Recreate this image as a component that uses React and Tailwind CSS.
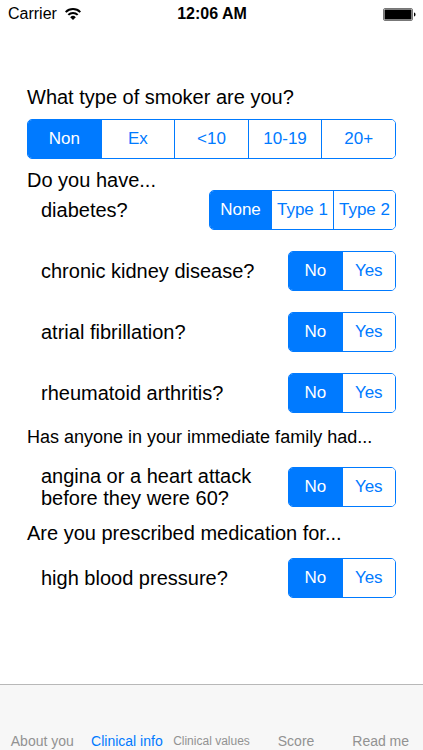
// src/App.jsx

import React, { useState } from 'react';
import clsx from 'clsx';

const yesNo = ['No', 'Yes'];

const conditions = [
    { id: 'diabetes', label: 'diabetes?', options: ['None', 'Type 1', 'Type 2'] },
    { id: 'kidney', label: 'chronic kidney disease?', options: yesNo },
    { id: 'fibrillation', label: 'atrial fibrillation?', options: yesNo },
    { id: 'arthritis', label: 'rheumatoid arthritis?', options: yesNo },
];

const tabs = ['About you', 'Clinical info', 'Clinical values', 'Score', 'Read me'];

function StatusBar() {
    return (
        <header className="grid h-7 grid-cols-3 items-center pl-2 pr-[7px] text-[16px]">
            <div className="flex items-center gap-2">
                <span>Carrier</span>
                <svg width="16" height="12" viewBox="0 0 16 12" fill="none" aria-hidden="true">
                    <path d="M0.7 4.1a10.3 10.3 0 0 1 14.6 0" stroke="black" strokeWidth="2" />
                    <path d="M3.3 6.9a6.6 6.6 0 0 1 9.4 0" stroke="black" strokeWidth="2" />
                    <path d="M8 12 5.2 9.2a4 4 0 0 1 5.6 0z" fill="black" />
                </svg>
            </div>
            <span className="text-center font-bold">12:06 AM</span>
            <svg className="justify-self-end" width="33" height="13" viewBox="0 0 33 13" aria-hidden="true">
                <rect x="0.5" y="0.5" width="29" height="12" rx="1.5" fill="white" stroke="#777" />
                <rect x="1.5" y="1.5" width="27" height="10" rx="0.5" fill="black" />
                <path d="M31 4.5c2 .5 2 3.5 0 4z" fill="black" />
            </svg>
        </header>
    );
}

function Segmented({ id, label, options, className }) {
    const [value, setValue] = useState(options[0]);

    return (
        <div
            role="radiogroup"
            aria-label={label}
            className={clsx(
                'flex h-10 shrink-0 overflow-hidden rounded-[5px] border border-[#007aff] text-[17px]',
                className
            )}
        >
            {options.map((option, i) => (
                <label
                    key={option}
                    className={clsx(
                        'relative flex flex-1 cursor-pointer items-center justify-center whitespace-nowrap pb-px has-focus-visible:underline',
                        i > 0 && 'border-l border-[#007aff]',
                        value === option ? 'bg-[#007aff] text-white' : 'bg-white text-[#007aff]'
                    )}
                >
                    <input
                        type="radio"
                        name={id}
                        value={option}
                        checked={value === option}
                        onChange={() => setValue(option)}
                        className="sr-only"
                    />
                    {option}
                </label>
            ))}
        </div>
    );
}

function Question({ id, label, options, children }) {
    return (
        <div className="flex items-center justify-between pl-3.5">
            <span>{children || label}</span>
            <Segmented
                id={id}
                label={label}
                options={options}
                className={options.length > 2 ? 'w-[187px]' : 'w-[108px]'}
            />
        </div>
    );
}

function App() {
    const [activeTab, setActiveTab] = useState('Clinical info');

    return (
        <div className="flex min-h-screen flex-col bg-white font-['Liberation_Sans',Arial,sans-serif] text-black">
            <StatusBar />

            <main className="grow px-[27px] pt-[59px] text-[20px] leading-[22px]">
                <h2 className="mb-3 leading-5">What type of smoker are you?</h2>
                <Segmented
                    id="smoker"
                    label="What type of smoker are you?"
                    options={['Non', 'Ex', '<10', '10-19', '20+']}
                />

                <h2 className="mt-[11px] leading-5">Do you have...</h2>
                <div className="flex flex-col gap-[21px]">
                    {conditions.map((item) => (
                        <Question key={item.id} {...item} />
                    ))}
                </div>

                <h2 className="mb-[18px] mt-3.5 text-[18px] leading-5">
                    Has anyone in your immediate family had...
                </h2>
                <Question
                    id="family"
                    label="angina or a heart attack before they were 60?"
                    options={yesNo}
                >
                    angina or a heart attack
                    <br />
                    before they were 60?
                </Question>

                <h2 className="mb-[15px] mt-3.5 leading-5">Are you prescribed medication for...</h2>
                <Question id="pressure" label="high blood pressure?" options={yesNo} />
            </main>

            <nav className="flex h-[66px] border-t border-[#b8b8b8] bg-[#f7f7f7]">
                {tabs.map((tab) => (
                    <button
                        key={tab}
                        type="button"
                        onClick={() => setActiveTab(tab)}
                        className={clsx(
                            'flex flex-1 basis-0 items-end justify-center whitespace-nowrap pb-px leading-4',
                            tab.length > 13 ? 'text-[12px]' : 'text-[14px]',
                            activeTab === tab ? 'text-[#007aff]' : 'text-[#929292]'
                        )}
                    >
                        {tab}
                    </button>
                ))}
            </nav>
        </div>
    );
}

export default App;
